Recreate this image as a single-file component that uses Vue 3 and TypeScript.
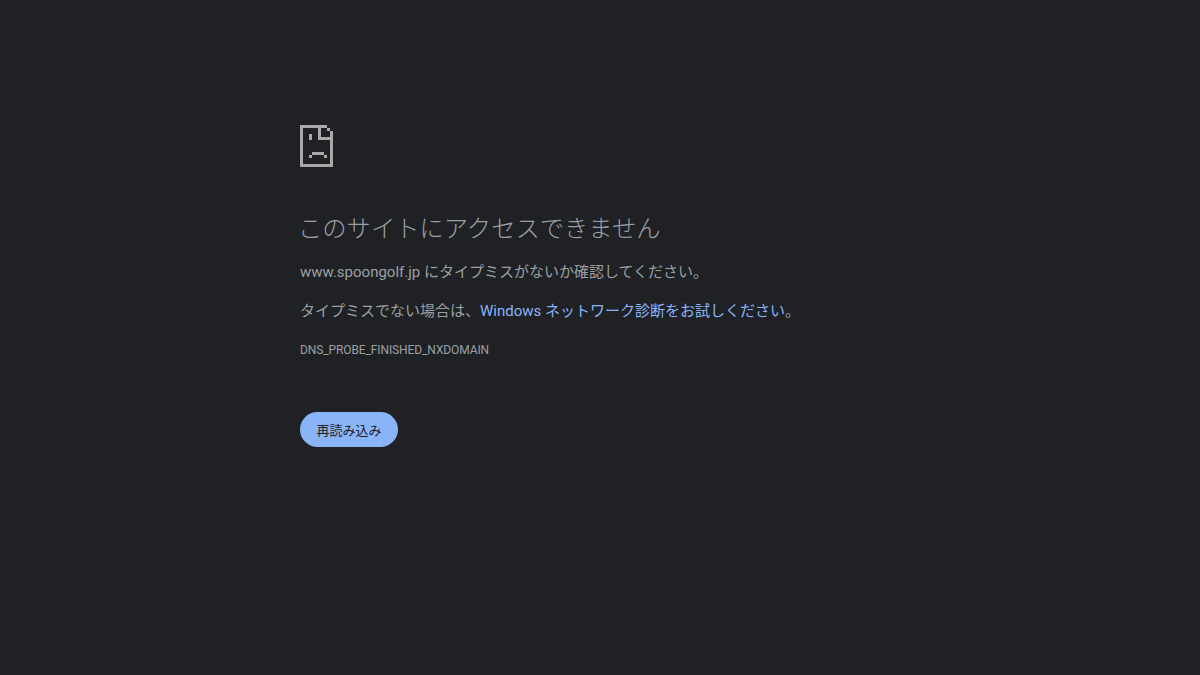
<script setup lang="ts">
const host: string = 'www.spoongolf.jp'
</script>

<template>
  <main class="page">
    <div class="content">
      <svg class="icon" width="34" height="42" viewBox="0 0 34 42" aria-hidden="true">
        <path class="ink" d="M0 0H27V3H3V39H30V6H33V42H0Z" />
        <path class="ink" d="M18 0H21V12H30V15H18Z" />
        <rect class="ink" x="27" y="3" width="3" height="3" />
        <rect class="ink" x="9" y="9" width="3" height="6" />
        <path class="ink" d="M12 27H24V30H27V33H24V30H12V33H9V30H12Z" />
      </svg>
      <h1 class="title">このサイトにアクセスできません</h1>
      <p class="line first">{{ host }} にタイプミスがないか確認してください。</p>
      <p class="line second">タイプミスでない場合は、<a class="link" href="#">Windows ネットワーク診断をお試しください</a>。</p>
      <div class="code">DNS_PROBE_FINISHED_NXDOMAIN</div>
      <button class="reload" type="button">再読み込み</button>
    </div>
  </main>
</template>

<style>
html, body { margin: 0; background: #202124; }
</style>

<style scoped>
.page {
  width: 1200px;
  height: 675px;
  overflow: hidden;
  background: #202124;
  color: #9aa0a6;
  font-family: Roboto, "Noto Sans CJK JP", sans-serif;
  box-sizing: border-box;
  padding: 125px 0 0 300px;
}
.content { display: flex; flex-direction: column; align-items: flex-start; }
.icon { display: block; }
.ink { fill: #a9a9a9; }
.title {
  margin: 46px 0 0 -2px;
  font-size: 24.3px;
  font-weight: 300;
  line-height: 32px;
  color: #9aa0a6;
}
.line { margin: 0; font-size: 15px; line-height: 24px; }
.first { margin-top: 15px; }
.second { margin-top: 15px; }
.link { color: #8ab4f8; text-decoration: none; }
.code { margin-top: 15px; font-size: 12px; line-height: 24px; letter-spacing: -0.11px; }
.reload {
  margin-top: 50px;
  width: 98px;
  height: 35px;
  padding: 0 0 1px;
  border: 0;
  border-radius: 18px;
  background: #8ab4f8;
  color: #202124;
  font: inherit;
  font-size: 13px;
}
</style>
